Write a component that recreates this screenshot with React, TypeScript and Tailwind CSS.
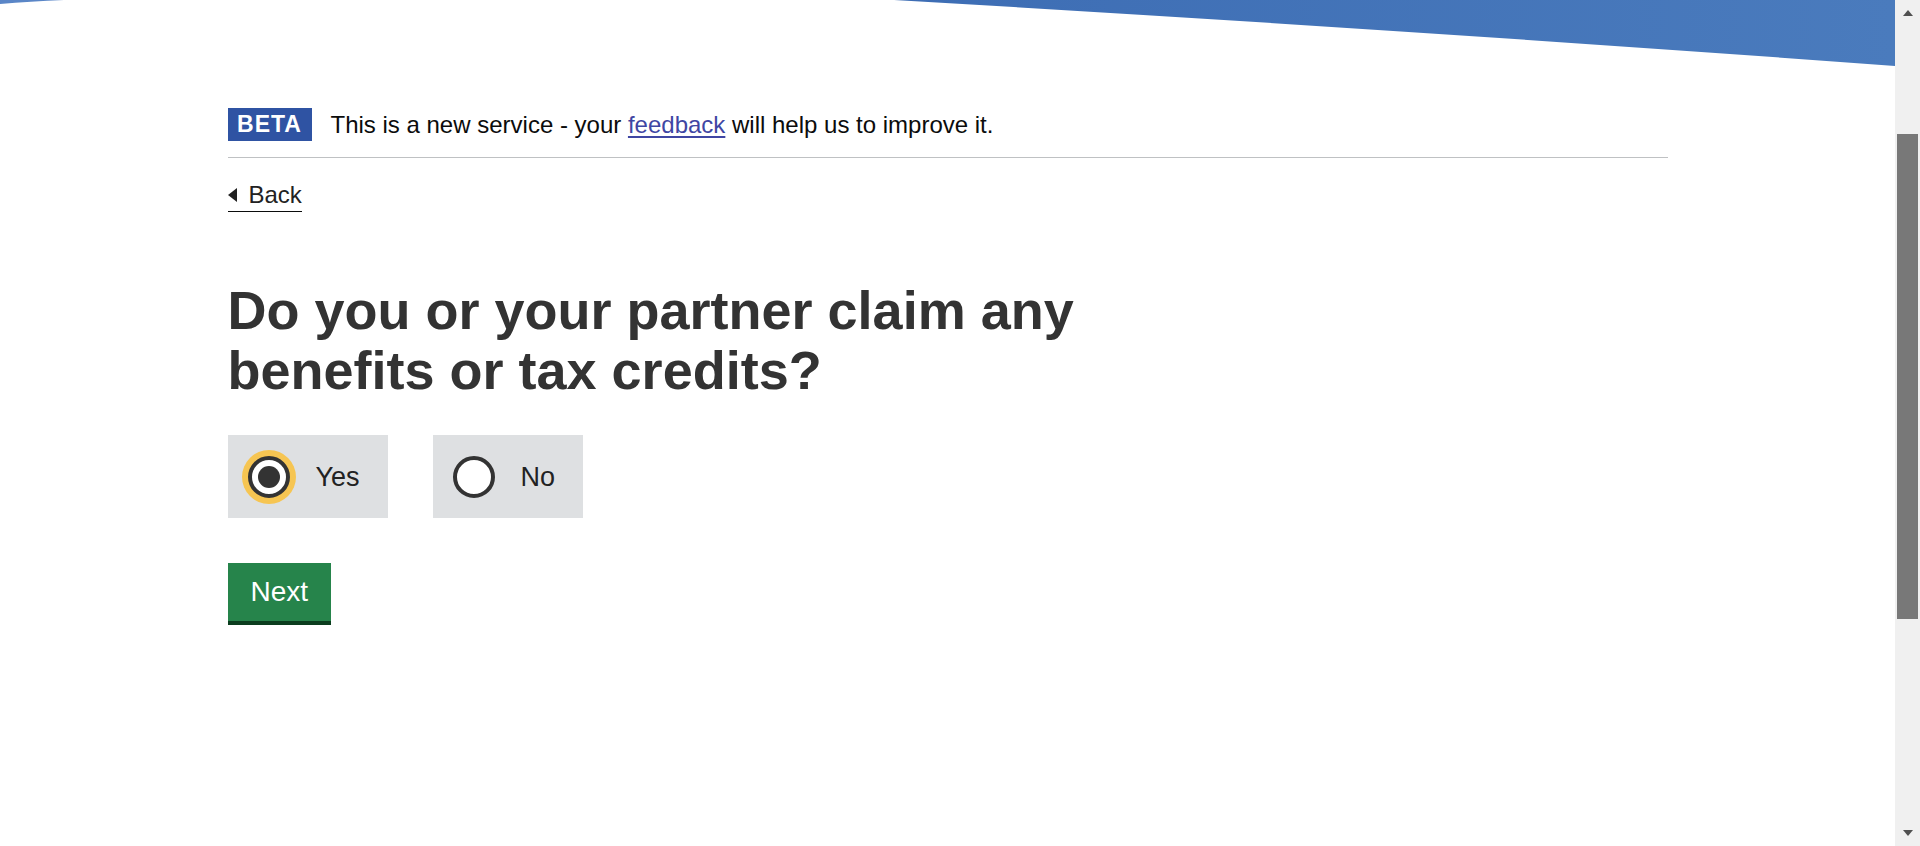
import React, { useState } from "react";

function TopWave() {
    return (
        <svg
            className="absolute top-0 left-0 w-full h-[70px] pointer-events-none"
            viewBox="0 0 1895 70"
            preserveAspectRatio="none"
        >
            <defs>
                <linearGradient id="wave" x1="0" y1="0" x2="1" y2="0">
                    <stop offset="0" stopColor="#3d6db4" />
                    <stop offset="1" stopColor="#4a7bbd" />
                </linearGradient>
            </defs>
            <path d="M894 0 Q1394 29 1895 66 L1895 0 Z" fill="url(#wave)" />
            <path d="M0 0 L64 0 Q30 1.5 0 4 Z" fill="#5a86c7" />
        </svg>
    );
}

function FakeScrollbar() {
    return (
        <div className="relative w-[25px] h-full bg-[#f0f0f0] shrink-0">
            <div className="absolute top-[10px] left-[8px] w-0 h-0 border-l-[5px] border-r-[5px] border-b-[6px] border-l-transparent border-r-transparent border-b-[#505050]" />
            <div className="absolute top-[134px] left-[2px] w-[21px] h-[485px] bg-[#787878]" />
            <div className="absolute bottom-[10px] left-[8px] w-0 h-0 border-l-[5px] border-r-[5px] border-t-[6px] border-l-transparent border-r-transparent border-t-[#505050]" />
        </div>
    );
}

function Radio({ label, checked, onSelect }: { label: string; checked: boolean; onSelect: () => void }) {
    return (
        <button
            type="button"
            onClick={onSelect}
            className="flex items-center h-[83px] pl-[20px] pr-[28px] bg-[#dee0e2] cursor-pointer"
        >
            <span
                className={
                    "flex items-center justify-center w-[42px] h-[42px] rounded-full border-[4px] border-[#333333] bg-white " +
                    (checked ? "shadow-[0_0_0_6px_#f6c552]" : "")
                }
            >
                {checked && <span className="block w-[22px] h-[22px] rounded-full bg-[#333333]" />}
            </span>
            <span className="ml-[26px] text-[27px] leading-[30px] text-[#222222]">{label}</span>
        </button>
    );
}

export default function App() {
    const [answer, setAnswer] = useState("yes");

    return (
        <div className="flex w-full h-screen overflow-hidden bg-white" style={{ fontFamily: '"Liberation Sans", Arial, sans-serif' }}>
            <div className="relative flex-1 min-w-0">
                <TopWave />
                <main className="relative max-w-[1440px] mx-auto pt-[108px]">
                    {/* phase banner */}
                    <div className="flex items-center pb-[16px] border-b border-[#bfc1c3]">
                        <strong className="flex items-center justify-center w-[84px] h-[33px] bg-[#2f53a3] text-white text-[23px] font-bold tracking-[1px] leading-none">
                            BETA
                        </strong>
                        <span className="ml-[19px] text-[24px] leading-[30px] text-[#0b0c0c]">
                            This is a new service - your{" "}
                            <a href="#" className="text-[#3f46a3] underline underline-offset-[3px]">
                                feedback
                            </a>{" "}
                            will help us to improve it.
                        </span>
                    </div>

                    <a
                        href="#"
                        className="inline-flex items-center mt-[23px] pb-[2px] border-b border-[#0b0c0c] text-[24px] leading-[28px] text-[#222222]"
                    >
                        <span className="w-0 h-0 border-t-[7px] border-b-[7px] border-r-[9px] border-t-transparent border-b-transparent border-r-[#222222]" />
                        <span className="ml-[12px]">Back</span>
                    </a>

                    <h1 className="mt-[68px] max-w-[960px] text-[54px] leading-[60px] font-bold text-[#333333]">
                        Do you or your partner claim any benefits or tax credits?
                    </h1>

                    <div className="flex gap-[45px] mt-[35px]">
                        <Radio label="Yes" checked={answer === "yes"} onSelect={() => setAnswer("yes")} />
                        <Radio label="No" checked={answer === "no"} onSelect={() => setAnswer("no")} />
                    </div>

                    <button
                        type="button"
                        className="mt-[45px] h-[62px] px-[23px] bg-[#26844b] border-b-[4px] border-[#0b3d1e] text-white text-[28px] leading-[30px]"
                    >
                        Next
                    </button>
                </main>
            </div>
            <FakeScrollbar />
        </div>
    );
}
